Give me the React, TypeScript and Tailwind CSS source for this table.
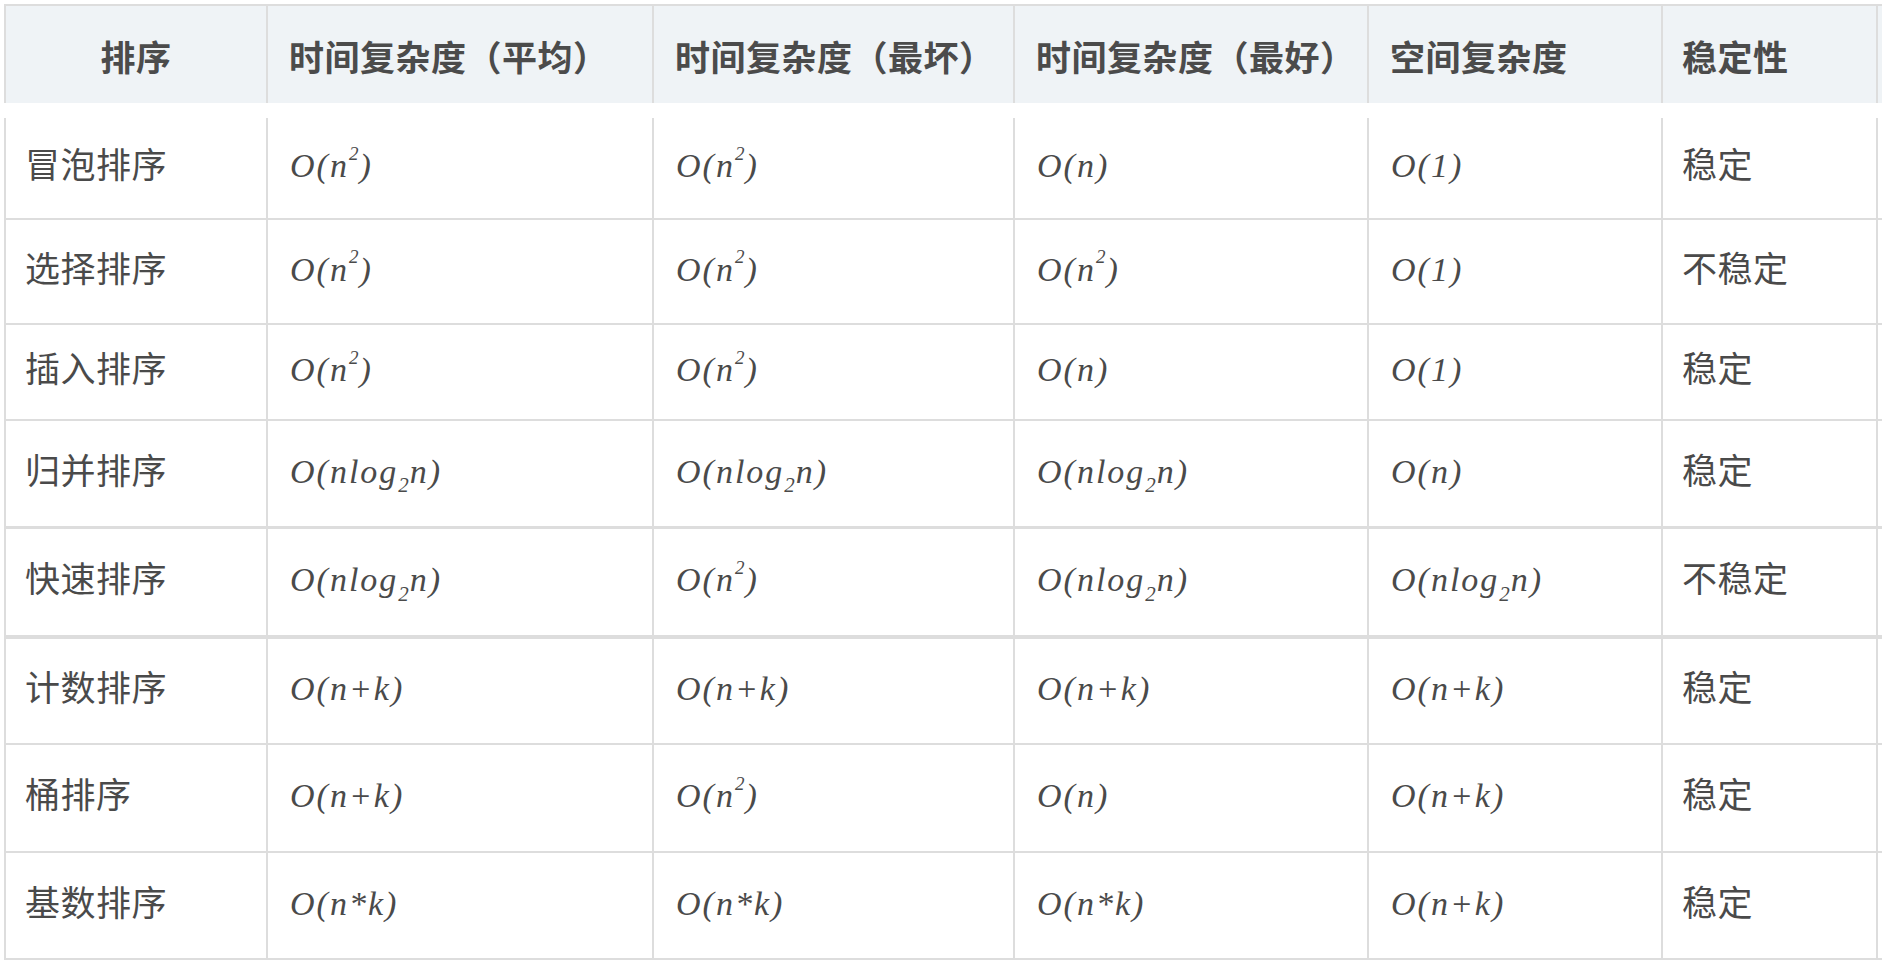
import React from "react";

type Cell = React.ReactNode;

const widths = ["w-[262px]", "w-[386px]", "w-[361px]", "w-[354px]", "w-[294px]", "w-[217px]"];
const pads = ["pl-[19px]", "pl-[22px]", "pl-[22px]", "pl-[22px]", "pl-[22px]", "pl-[19px]"];
const hpads = ["", "pl-[21px]", "pl-[21px]", "pl-[21px]", "pl-[21px]", "pl-[19px]"];

const M = ({ children }: { children: React.ReactNode }) => (
  <span
    className="inline-block mt-[4px] italic text-[34px] tracking-[2px]"
    style={{ fontFamily: '"Liberation Serif", "DejaVu Serif", serif' }}
  >
    {children}
  </span>
);

const n2 = (
  <M>
    O(n<sup className="text-[19px] align-[0.42em] leading-none tracking-[1px]">2</sup>)
  </M>
);
const on = <M>O(n)</M>;
const o1 = <M>O(1)</M>;
const nlog = (
  <M>
    O(nlog<sub className="text-[21px] align-[-0.22em] leading-none tracking-[1px]">2</sub>n)
  </M>
);
const nk = <M>O(n+k)</M>;
const nmk = <M>O(n*k)</M>;

const rows: { h: string; b: string; cells: Cell[] }[] = [
  { h: "h-[102px]", b: "border-b-2", cells: ["冒泡排序", n2, n2, on, o1, "稳定"] },
  { h: "h-[105px]", b: "border-b-2", cells: ["选择排序", n2, n2, n2, o1, "不稳定"] },
  { h: "h-[96px]", b: "border-b-2", cells: ["插入排序", n2, n2, on, o1, "稳定"] },
  { h: "h-[108px]", b: "border-b-[3px]", cells: ["归并排序", nlog, nlog, nlog, on, "稳定"] },
  { h: "h-[110px]", b: "border-b-[4px]", cells: ["快速排序", nlog, n2, nlog, nlog, "不稳定"] },
  { h: "h-[106px]", b: "border-b-2", cells: ["计数排序", nk, nk, nk, nk, "稳定"] },
  { h: "h-[108px]", b: "border-b-2", cells: ["桶排序", nk, n2, on, nk, "稳定"] },
  { h: "h-[107px]", b: "border-b-2", cells: ["基数排序", nmk, nmk, nmk, nk, "稳定"] },
];

const headers = ["排序", "时间复杂度（平均）", "时间复杂度（最坏）", "时间复杂度（最好）", "空间复杂度", "稳定性"];

export default function App() {
  return (
    <div
      className="w-[1882px] h-[964px] bg-white pt-[4px] pl-[4px] text-[#4a4a4a]"
      style={{ fontFamily: '"Noto Sans CJK SC", "Noto Sans", sans-serif' }}
    >
      <div className="flex h-[99px] bg-[#eff3f6] border-t-2 border-[#dddddd]">
        {headers.map((t, i) => (
          <div
            key={i}
            className={`${widths[i]} border-l-2 border-[#dddddd] ${i === 5 ? "border-r-2" : ""} flex items-center pt-[3px] ${
              i === 0 ? "justify-center" : hpads[i]
            } text-[35px] tracking-[0.5px] font-bold text-[#4b4b4b]`}
          >
            {t}
          </div>
        ))}
      </div>
      <div className="mt-[15px] flex flex-col">
        {rows.map((r, ri) => (
          <div key={ri} className={`flex ${r.h} ${r.b} border-[#dddddd]`}>
            {r.cells.map((c, ci) => (
              <div
                key={ci}
                className={`${widths[ci]} border-l-2 border-[#dddddd] ${ci === 5 ? "border-r-2" : ""} flex items-center ${pads[ci]} pb-[9px] text-[35px] tracking-[0.5px]`}
              >
                {c}
              </div>
            ))}
          </div>
        ))}
      </div>
    </div>
  );
}
